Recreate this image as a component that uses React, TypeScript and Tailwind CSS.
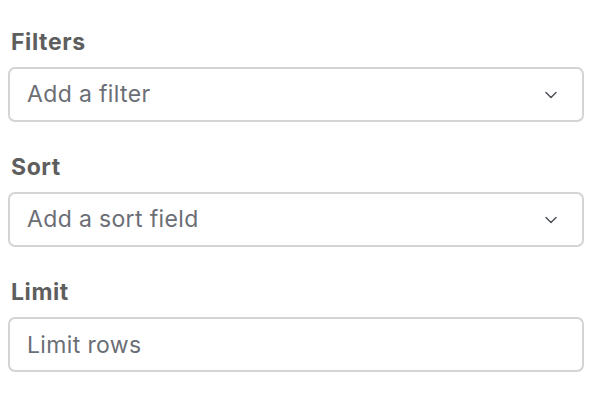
import { ChevronDown } from "lucide-react";

type FieldProps = {
    label: string;
    placeholder: string;
    select?: boolean;
};

function Field({ label, placeholder, select }: FieldProps) {
    return (
        <div className="flex flex-col">
            <label className="text-[23px] leading-[28px] font-bold tracking-[0.6px] text-[#5e5e5e] pl-[3px] mb-[11px]">
                {label}
            </label>
            {select ? (
                <div className="flex items-center justify-between h-[55px] border-2 border-[#d4d4d4] rounded-[7px] pl-[17px] pr-[21px] bg-white">
                    <span className="text-[23px] tracking-[0.35px] text-[#6b6e75]">{placeholder}</span>
                    <ChevronDown className="w-[20px] h-[20px] text-[#4f535a]" strokeWidth={1.8} />
                </div>
            ) : (
                <input
                    className="h-[55px] border-2 border-[#d4d4d4] rounded-[7px] px-[17px] text-[23px] tracking-[0.35px] text-[#6b6e75] placeholder:text-[#6b6e75] outline-none bg-white"
                    placeholder={placeholder}
                />
            )}
        </div>
    );
}

export default function App() {
    return (
        <div
            className="w-[596px] h-[400px] bg-white pt-[28px] pl-[8px] pr-[12px] flex flex-col gap-[31px]"
            style={{ fontFamily: "Inter, 'Noto Sans', sans-serif" }}
        >
            <Field label="Filters" placeholder="Add a filter" select />
            <Field label="Sort" placeholder="Add a sort field" select />
            <Field label="Limit" placeholder="Limit rows" />
        </div>
    );
}
